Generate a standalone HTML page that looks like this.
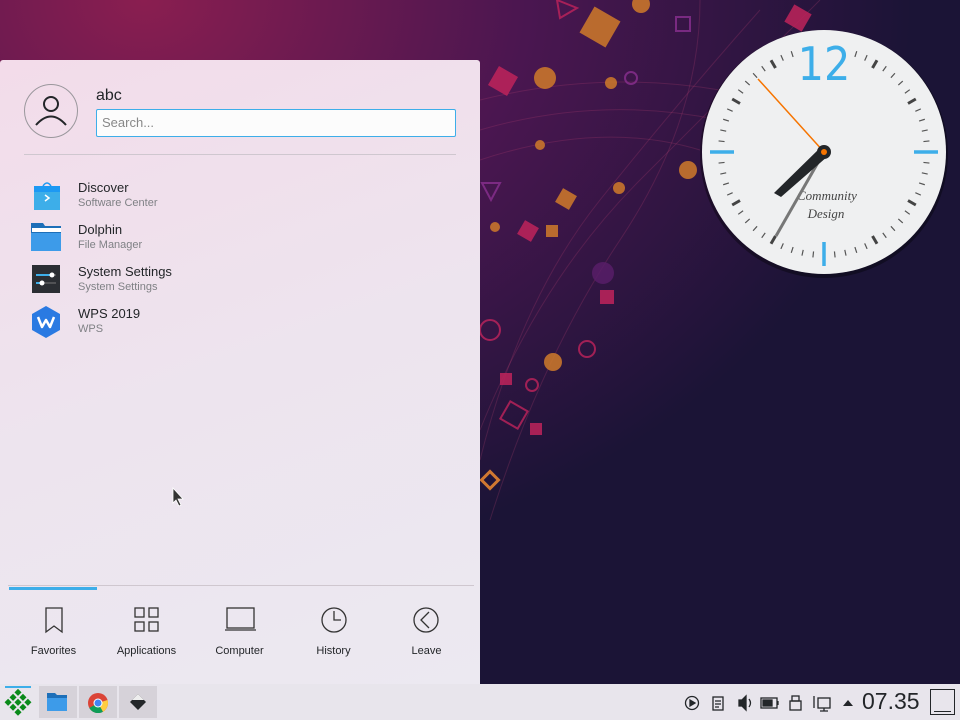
<!DOCTYPE html>
<html><head><meta charset="utf-8"><style>
*{margin:0;padding:0;box-sizing:border-box}
body{width:960px;height:720px;overflow:hidden;position:relative;font-family:"Liberation Sans","DejaVu Sans",sans-serif;background:#1b1436}
#bg{position:absolute;left:0;top:0}
#menu{position:absolute;left:0;top:60px;width:480px;height:624px;background:linear-gradient(160deg,#f3dcea 0%,#ede4ee 50%,#ece9f1 100%);border-radius:3px 3px 0 0}
.t{position:absolute;color:#232629;white-space:nowrap}
.s{position:absolute;color:#7f8185;font-size:11px;white-space:nowrap}
#task{position:absolute;left:0;top:684px;width:960px;height:36px;background:#e8e5ec}
</style></head><body>
<svg id="bg" width="960" height="720">
<defs>
<radialGradient id="g1" cx="0.15" cy="0" r="0.8"><stop offset="0" stop-color="#8a1e50"/><stop offset="0.5" stop-color="#4a1650"/><stop offset="1" stop-color="#1b1436"/></radialGradient>
</defs>
<rect width="960" height="720" fill="#1b1436"/>
<rect width="960" height="720" fill="url(#g1)"/>
<g fill="none" stroke="#b5406e" stroke-opacity="0.25">
<path d="M480 460 Q520 300 600 200 T760 10"/><path d="M480 430 Q540 280 640 180 T820 0"/><path d="M490 520 Q540 360 620 240 T700 0"/><path d="M480 160 Q600 120 700 150"/><path d="M480 130 Q600 95 720 120"/><path d="M480 100 Q600 70 720 90"/>
</g>
<g fill="#d07a2a" opacity="0.85">
<rect x="585" y="12" width="30" height="30" transform="rotate(30 600 27)"/><circle cx="545" cy="78" r="11"/><circle cx="611" cy="83" r="6"/><circle cx="688" cy="170" r="9"/><circle cx="619" cy="188" r="6"/><rect x="558" y="191" width="16" height="16" transform="rotate(30 566 199)"/><rect x="546" y="225" width="12" height="12"/><circle cx="553" cy="362" r="9"/><circle cx="495" cy="227" r="5"/><circle cx="641" cy="4" r="9"/><circle cx="540" cy="145" r="5"/><rect x="484" y="474" width="12" height="12" transform="rotate(45 490 480)" fill="none" stroke="#f08a30" stroke-width="3"/>
</g>
<g fill="#c0245c" opacity="0.85">
<rect x="492" y="70" width="22" height="22" transform="rotate(30 503 81)"/><rect x="788" y="8" width="20" height="20" transform="rotate(30 798 18)"/><rect x="600" y="290" width="14" height="14"/><rect x="520" y="223" width="16" height="16" transform="rotate(30 528 231)"/><rect x="500" y="373" width="12" height="12"/><rect x="530" y="423" width="12" height="12"/>
</g>
<g fill="none" stroke="#c0245c" stroke-width="2" opacity="0.8">
<circle cx="490" cy="330" r="10"/><circle cx="587" cy="349" r="8"/><circle cx="532" cy="385" r="6"/><rect x="504" y="405" width="20" height="20" transform="rotate(30 514 415)"/><path d="M557 0 L577 8 L560 18Z"/><path d="M482 183 L500 183 L491 200Z" stroke="#8a3090"/><circle cx="631" cy="78" r="6" stroke="#8a3090"/><rect x="676" y="17" width="14" height="14" stroke="#8a3090"/>
</g>
<circle cx="603" cy="273" r="11" fill="#5a1e6a" opacity="0.8"/>
</svg>

<svg style="position:absolute;left:0;top:0" width="960" height="720">
<defs>
<line id="mt" x1="0" y1="-100" x2="0" y2="-106" stroke="#555" stroke-width="1.2"/>
<line id="ht" x1="0" y1="-97" x2="0" y2="-106" stroke="#444" stroke-width="3"/>
</defs>
<circle cx="824" cy="154" r="124" fill="#000" opacity="0.35"/>
<circle cx="824" cy="152" r="122" fill="#eff0f1"/>
<g transform="translate(824 152)">
<g id="q">
<use href="#mt" transform="rotate(6)"/><use href="#mt" transform="rotate(12)"/><use href="#mt" transform="rotate(18)"/><use href="#mt" transform="rotate(24)"/><use href="#ht" transform="rotate(30)"/><use href="#mt" transform="rotate(36)"/><use href="#mt" transform="rotate(42)"/><use href="#mt" transform="rotate(48)"/><use href="#mt" transform="rotate(54)"/><use href="#ht" transform="rotate(60)"/><use href="#mt" transform="rotate(66)"/><use href="#mt" transform="rotate(72)"/><use href="#mt" transform="rotate(78)"/><use href="#mt" transform="rotate(84)"/>
</g>
<use href="#q" transform="rotate(90)"/><use href="#q" transform="rotate(180)"/><use href="#q" transform="rotate(270)"/>
<g stroke="#3daee9" stroke-width="3.5"><line x1="90" y1="0" x2="114" y2="0"/><line x1="-90" y1="0" x2="-114" y2="0"/><line x1="0" y1="90" x2="0" y2="114"/></g>
</g>
<rect x="796" y="34" width="56" height="50" fill="#eff0f1"/>
<text x="824" y="80" text-anchor="middle" font-family="DejaVu Sans,sans-serif" font-size="46" fill="#3daee9" transform="translate(824 0) scale(0.9 1) translate(-824 0)">12</text>
<text x="827" y="200" text-anchor="middle" font-family="Liberation Serif,serif" font-style="italic" font-size="13" fill="#444">Community</text>
<text x="826" y="218" text-anchor="middle" font-family="Liberation Serif,serif" font-style="italic" font-size="13" fill="#444">Design</text>
<line x1="824" y1="152" x2="776" y2="236" stroke="#777" stroke-width="3"/>
<path d="M821 147 L828 156 L781 197 L774 193Z" fill="#232629"/>
<line x1="824" y1="152" x2="758" y2="79" stroke="#f67400" stroke-width="1.5"/>
<circle cx="824" cy="152" r="7" fill="#232629"/><circle cx="824" cy="152" r="3" fill="#f67400"/>
</svg>

<div id="menu">
<svg style="position:absolute;left:24px;top:24px" width="54" height="54"><circle cx="27" cy="27" r="26.5" fill="none" stroke="#9a979c"/><circle cx="27" cy="20" r="7" fill="none" stroke="#232629" stroke-width="2"/><path d="M12 41 Q27 24 42 41" fill="none" stroke="#232629" stroke-width="2"/></svg>
<div class="t" style="left:96px;top:27px;font-size:16px">abc</div>
<div style="position:absolute;left:96px;top:49px;width:360px;height:28px;background:#fcfcfc;border:1px solid #3daee9;border-radius:2px;font-size:13px;color:#888;padding:5px 0 0 5px">Search...</div>
<div style="position:absolute;left:24px;top:94px;width:432px;height:1px;background:#cfc7cf"></div>

<svg style="position:absolute;left:32px;top:121px" width="30" height="30"><path d="M11 5 Q15 -1 19 5" fill="none" stroke="#1d99f3" stroke-width="1.5"/><rect x="2" y="5" width="26" height="24" fill="#3daee9"/><rect x="2" y="5" width="26" height="6" fill="#1d99f3"/><path d="M13 14 L17 17 L13 20" fill="none" stroke="#fff" stroke-width="1.5"/></svg>
<div class="t" style="left:78px;top:120px;font-size:13px">Discover</div><div class="s" style="left:78px;top:137px">Software Center</div>

<svg style="position:absolute;left:31px;top:163px" width="32" height="28"><path d="M0 0 H12 L14 3 H30 V28 H0Z" fill="#1d6fb8"/><rect x="1" y="5" width="29" height="4" fill="#fff"/><path d="M0 10 H30 V28 H0Z" fill="#3d9be9"/></svg>
<div class="t" style="left:78px;top:162px;font-size:13px">Dolphin</div><div class="s" style="left:78px;top:179px">File Manager</div>

<svg style="position:absolute;left:32px;top:205px" width="28" height="28"><rect width="28" height="28" fill="#2b2e33"/><line x1="4" y1="10" x2="24" y2="10" stroke="#777"/><line x1="4" y1="10" x2="20" y2="10" stroke="#3daee9" stroke-width="2"/><circle cx="20" cy="10" r="2.5" fill="#fff"/><line x1="4" y1="18" x2="24" y2="18" stroke="#777"/><line x1="4" y1="18" x2="10" y2="18" stroke="#3daee9" stroke-width="2"/><circle cx="10" cy="18" r="2.5" fill="#fff"/></svg>
<div class="t" style="left:78px;top:204px;font-size:13px">System Settings</div><div class="s" style="left:78px;top:221px">System Settings</div>

<svg style="position:absolute;left:32px;top:246px" width="28" height="32"><path d="M14 0 L28 8 V24 L14 32 L0 24 V8Z" fill="#2a7ae2"/><path d="M6 11 L10 21 L14 14 L18 21 L22 11" fill="none" stroke="#fff" stroke-width="2.5" stroke-linejoin="round"/></svg>
<div class="t" style="left:78px;top:246px;font-size:13px">WPS 2019</div><div class="s" style="left:78px;top:263px">WPS</div>

<div style="position:absolute;left:8px;top:525px;width:466px;height:1px;background:#cfc7cf"></div>
<div style="position:absolute;left:9px;top:527px;width:88px;height:3px;background:#3daee9"></div>

<svg style="position:absolute;left:0;top:540px" width="480" height="36" fill="none" stroke="#333" stroke-width="1.3">
<path d="M46 8 H62 V32 L54 26 L46 32Z"/>
<rect x="135" y="8" width="9" height="9"/><rect x="149" y="8" width="9" height="9"/><rect x="135" y="22" width="9" height="9"/><rect x="149" y="22" width="9" height="9"/>
<rect x="227" y="8" width="27" height="20"/><path d="M225 30 H256"/>
<circle cx="334" cy="20" r="12"/><path d="M334 11 V20 H341"/>
<circle cx="426" cy="20" r="12"/><path d="M429 12 L421 20 L429 28"/>
</svg>
<div class="t" style="left:0;width:107px;text-align:center;top:585px;font-size:11px">Favorites</div>
<div class="t" style="left:100px;width:93px;text-align:center;top:585px;font-size:11px">Applications</div>
<div class="t" style="left:193px;width:93px;text-align:center;top:585px;font-size:11px">Computer</div>
<div class="t" style="left:287px;width:93px;text-align:center;top:585px;font-size:11px">History</div>
<div class="t" style="left:380px;width:93px;text-align:center;top:585px;font-size:11px">Leave</div>
<svg style="position:absolute;left:172px;top:427px" width="12" height="20"><path d="M1 1 V16 L4 13 L7 19 L9 18 L6 12 H11Z" fill="#333" stroke="#fff" stroke-width="0.8"/></svg>
</div>

<div id="task">
<div style="position:absolute;left:5px;top:2px;width:26px;height:2px;background:#3daee9"></div>
<svg style="position:absolute;left:4px;top:5px" width="28" height="28"><g fill="#0a8a1a" transform="rotate(45 14 14)"><rect x="4" y="4" width="5" height="5"/><rect x="11" y="4" width="5" height="5"/><rect x="18" y="4" width="5" height="5"/><rect x="4" y="11" width="5" height="5"/><rect x="11" y="11" width="5" height="5"/><rect x="18" y="11" width="5" height="5"/><rect x="4" y="18" width="5" height="5"/><rect x="11" y="18" width="5" height="5"/><rect x="18" y="18" width="5" height="5"/></g></svg>
<div style="position:absolute;left:39px;top:2px;width:38px;height:32px;background:#d6d2d9"></div>
<svg style="position:absolute;left:47px;top:9px" width="22" height="19"><path d="M0 0 H8 L10 2 H20 V18 H0Z" fill="#1d6fb8"/><path d="M0 5 H20 V18 H0Z" fill="#3d9be9"/></svg>
<div style="position:absolute;left:79px;top:2px;width:38px;height:32px;background:#d6d2d9"></div>
<svg style="position:absolute;left:87px;top:8px" width="22" height="22"><circle cx="11" cy="11" r="10" fill="#db4437"/><path d="M11 11 L2.3 16 A10 10 0 0 0 16 19.7Z" fill="#0f9d58"/><path d="M11 11 L16 19.7 A10 10 0 0 0 20.5 8Z" fill="#ffcd40"/><circle cx="11" cy="11" r="4.5" fill="#fff"/><circle cx="11" cy="11" r="3.5" fill="#4285f4"/></svg>
<div style="position:absolute;left:119px;top:2px;width:38px;height:32px;background:#d6d2d9"></div>
<svg style="position:absolute;left:128px;top:9px" width="20" height="18"><path d="M10 1 L18 9 L10 17 L2 9Z" fill="#232629"/><path d="M10 1 L4 7 L16 7Z" fill="#eee"/></svg>
<svg style="position:absolute;left:680px;top:8px" width="180" height="22" fill="none" stroke="#232629" stroke-width="1.3">
<circle cx="12" cy="11" r="6.5"/><path d="M10 8 L15 11 L10 14Z" fill="#232629"/>
<rect x="33" y="5" width="10" height="13"/><path d="M35 9 H41 M35 12 H41 M35 15 H39"/>
<path d="M59 8 H62 L66 4 V18 L62 14 H59Z" fill="#232629"/><path d="M69 7 Q72 11 69 15"/>
<rect x="81" y="6" width="16" height="10"/><rect x="83" y="8" width="9" height="6" fill="#232629"/><path d="M98 9 V13"/>
<rect x="112" y="4" width="7" height="5"/><rect x="110" y="9" width="11" height="9"/>
<rect x="138" y="6" width="12" height="10"/><path d="M134 4 V16 M144 16 V19 M140 19 H148"/>
<path d="M163 14 L168 8 L173 14Z" fill="#232629" stroke="none"/>
</svg>
<div class="t" style="left:862px;top:4px;font-size:23px;color:#232629">07.35</div>
<div style="position:absolute;left:930px;top:5px;width:25px;height:26px;border:1px solid #232629"></div>
<div style="position:absolute;left:934px;top:27px;width:17px;height:1px;background:#232629"></div>
</div>
</body></html>
